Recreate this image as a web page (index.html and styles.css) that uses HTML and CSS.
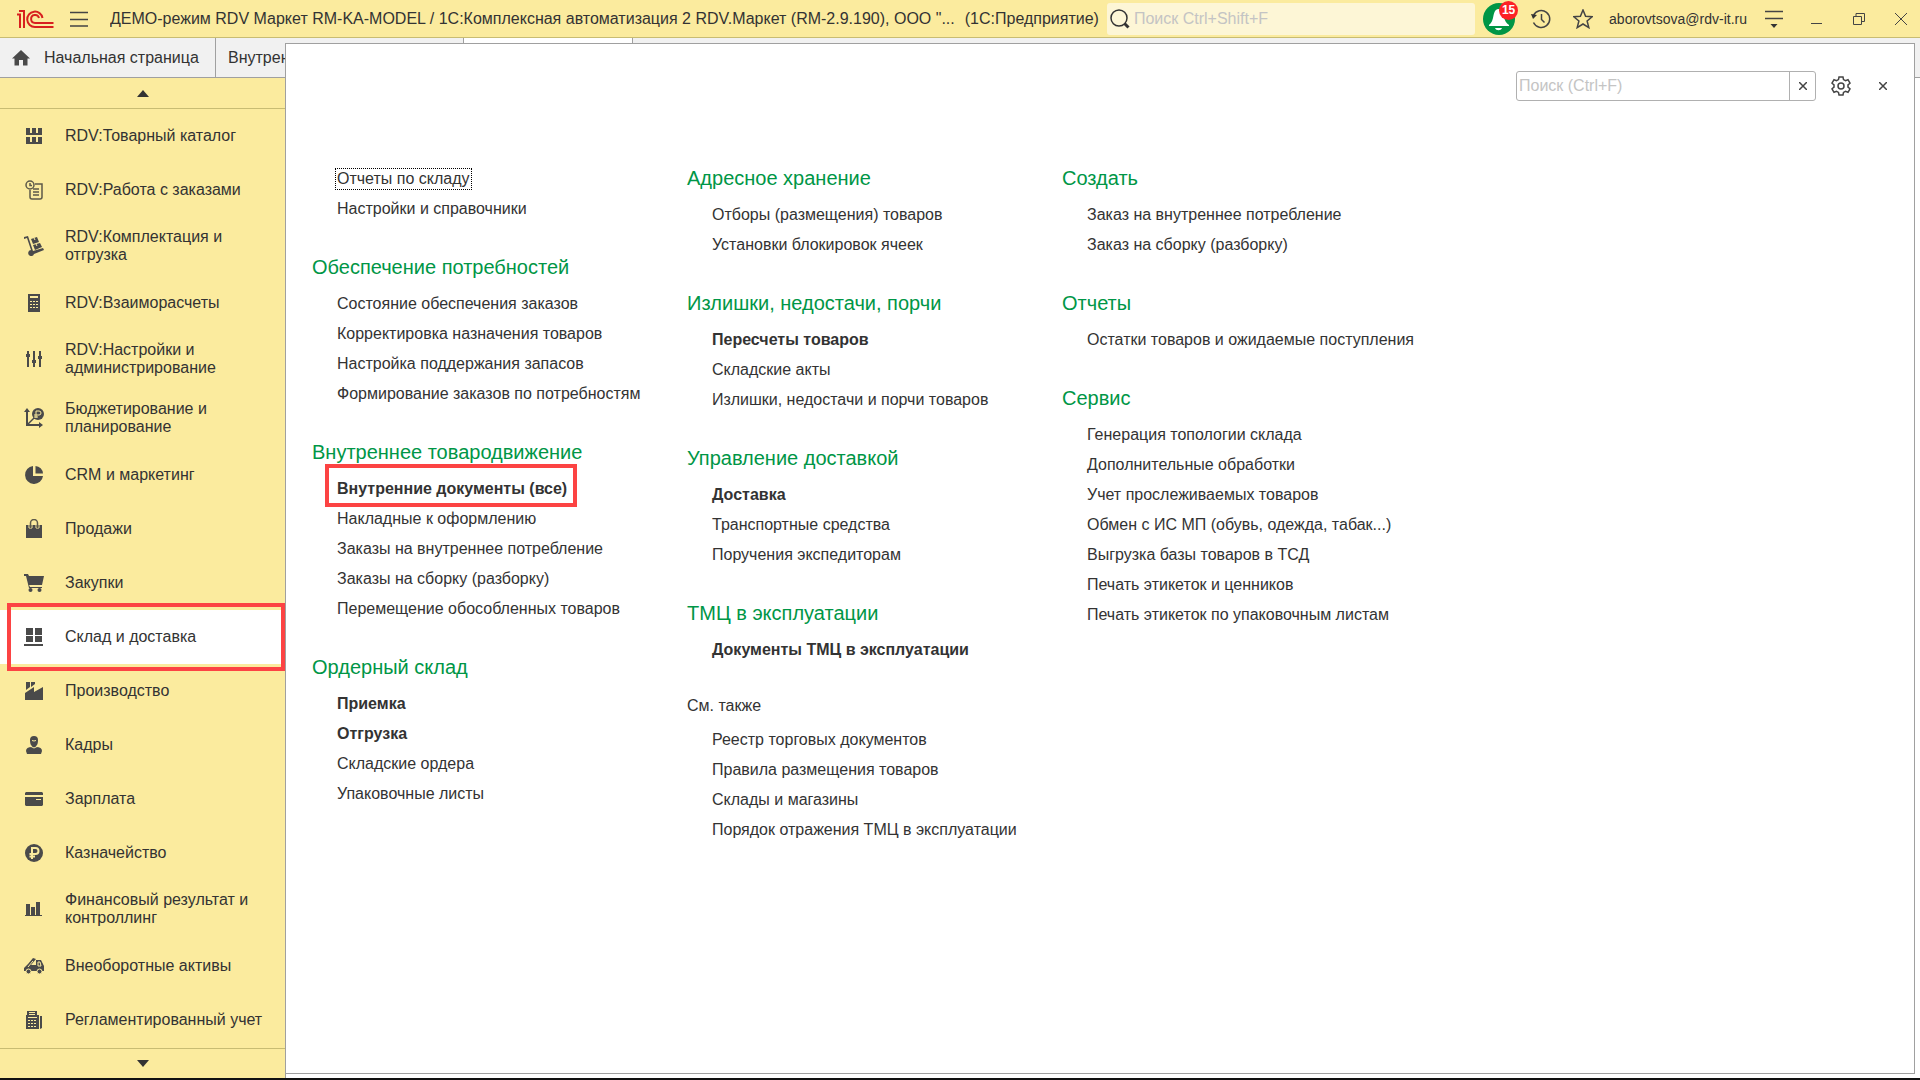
FILE: index.html
```html
<!DOCTYPE html>
<html lang="ru">
<head>
    <meta charset="UTF-8">
    <meta name="viewport" content="width=device-width, initial-scale=1.0">
    <title>1С:Предприятие</title>
    <link rel="stylesheet" href="styles.css">
</head>
<body>

    <!-- Top bar -->
    <header class="topbar">
        <svg class="logo" viewBox="0 0 38 20">
            <path d="M1 5.500H4V19M3 2H8V19M26.500 9A7.700 7.700 0 1 0 19 18H37.500M23 9A4 4 0 1 0 19 14H37.500"/>
        </svg>
        <button class="icon-btn menu-btn" aria-label="Меню">
            <svg viewBox="0 0 18 16"><path d="M0 1.500H18M0 8.500H18M0 15H18"/></svg>
        </button>
        <div class="app-title">ДЕМО-режим RDV Маркет RM-KA-MODEL / 1С:Комплексная автоматизация 2 RDV.Маркет (RM-2.9.190), ООО "...</div>
        <div class="app-name">(1С:Предприятие)</div>
        <div class="global-search">
            <svg viewBox="0 0 20 20"><circle cx="9" cy="9" r="8"/><path class="handle" d="M14.500 14.500L18.500 18.500"/></svg>
            <input type="text" placeholder="Поиск Ctrl+Shift+F" aria-label="Поиск по всей программе">
        </div>
        <button class="bell" aria-label="Уведомления">
            <svg viewBox="0 0 32 32">
                <circle cx="16" cy="16" r="16" fill="#009646"/>
                <path d="M15 6c-4 1-4 5-5 9-1 4-2 5-4 7v1h20v-1c-3-2-4-4-5-8-1-4-2-8-6-8zM12 25h7c-1 3-6 3-7 0z" fill="#fff"/>
            </svg>
            <span class="badge">15</span>
        </button>
        <button class="icon-btn history-btn" aria-label="История">
            <svg viewBox="0 0 20 20"><path d="M2.500 6.500A8.500 8.500 0 1 1 2.500 13.500M10.500 5V10.500L13.500 13.500"/><path class="solid" d="M0 5L6 6L2 10z"/></svg>
        </button>
        <button class="icon-btn star-btn" aria-label="Избранное">
            <svg viewBox="0 0 20 20"><path d="M10 1L12.600 7.300L19.200 7.700L14.100 12L15.800 18.600L10 15L4.200 18.600L5.900 12L0.800 7.700L7.400 7.300z"/></svg>
        </button>
        <a class="user" href="#">aborovtsova@rdv-it.ru</a>
        <button class="icon-btn settings-btn" aria-label="Настройки окна">
            <svg viewBox="0 0 18 18"><path d="M0 1.500H18M0 8.500H18"/><path class="solid" d="M5.500 14H12.500L9 18z"/></svg>
        </button>
        <div class="window-btns">
            <button class="icon-btn" aria-label="Свернуть"><svg viewBox="0 0 12 12"><path d="M0 10.500H11"/></svg></button>
            <button class="icon-btn" aria-label="Развернуть"><svg viewBox="0 0 12 12"><path d="M0.500 3.500H8.500V11.500H0.500zM3 3.500V0.500H11.500V8.500H8.500"/></svg></button>
            <button class="icon-btn" aria-label="Закрыть"><svg viewBox="0 0 12 12"><path d="M0 0L12 12M12 0L0 12"/></svg></button>
        </div>
    </header>

    <div class="workspace">

        <!-- Open windows -->
        <div class="tabs">
            <button class="tab tab-home">
                <svg viewBox="0 0 18 16"><path d="M9 0L0 8.500H2.500V15.500H7V10H11V15.500H15.500V8.500H18z"/></svg>
                Начальная страница
            </button>
            <button class="tab tab-doc">Внутренние документы</button>
            <button class="tab tab-active" aria-label="Текущее окно"></button>
        </div>

        <!-- Sections -->
        <nav class="sidebar">
            <button class="scroll-btn" aria-label="Вверх"><svg viewBox="0 0 12 7"><path d="M6 0L12 7H0z"/></svg></button>
            <ul class="sections">
                <li><a href="#">
                    <svg viewBox="0 0 20 20"><path d="M2 2h4v5H2zM8 2h4v5H8zM14 2h4v5h-4zM2 7h16v2H2zM2 11h4v5H2zM8 11h4v5H8zM14 11h4v5h-4zM2 16h16v2H2z"/></svg>
                    <span>RDV:Товарный каталог</span></a></li>
                <li><a href="#">
                    <svg viewBox="0 0 20 20" class="line"><circle cx="6" cy="5" r="4"/><path d="M6 3v2.500h2M11 4h7v13q0 2-2 2H8q-2 0-2-2v-7M9 9h6M9 12h6M9 15h6"/></svg>
                    <span>RDV:Работа с заказами</span></a></li>
                <li><a href="#">
                    <svg viewBox="0 0 20 20"><path d="M0 1l4-1 5 15 10-3 1 2-10 4a3 3 0 1 1-3-4L3 2 0 3zM7 3l6-2 2 5-6 2zM9 9l7-2 2 4-7 3z"/><path class="cut" d="M10 2l1 2M12 8l1 2"/></svg>
                    <span>RDV:Комплектация и отгрузка</span></a></li>
                <li><a href="#">
                    <svg viewBox="0 0 20 20"><path d="M4 1h12v18H4z"/><path class="cut" d="M6 3.500h8M6 4.500h8M6 8.500h2M9 8.500h2M12 8.500h2M6 11.500h2M9 11.500h2M12 11.500h2M6 14.500h2M9 14.500h2M12 14.500h2"/></svg>
                    <span>RDV:Взаиморасчеты</span></a></li>
                <li><a href="#">
                    <svg viewBox="0 0 20 20"><path d="M3 2h2v3h1v3H5v10H3V8H2V5h1zM9 2h2v9h1v3h-1v4H9v-4H8v-3h1zM15 2h2v5h1v3h-1v8h-2v-8h-1V7h1z"/></svg>
                    <span>RDV:Настройки и администрирование</span></a></li>
                <li><a href="#">
                    <svg viewBox="0 0 20 20"><path d="M3 0l3 4H4v11l6-6 1 1-6 6h10v-2l4 3-4 3v-2H2V4H0z"/><circle cx="14" cy="6" r="6"/><path class="cut" d="M12 10V3h3q2 0 2 2t-2 2h-5M10 9h4"/></svg>
                    <span>Бюджетирование и планирование</span></a></li>
                <li><a href="#">
                    <svg viewBox="0 0 20 20"><path d="M9 1a9 9 0 1 0 10 10H9zM11.500 1v7.500H19a8 8 0 0 0-7.500-7.500z"/></svg>
                    <span>CRM и маркетинг</span></a></li>
                <li><a href="#">
                    <svg viewBox="0 0 20 20"><path d="M2 6h16v13H2z"/><path class="cut" d="M5 6v3h3V6M12 6v3h3V6"/><path class="thin" d="M6.500 9V4a3.500 3.500 0 0 1 7 0v5"/></svg>
                    <span>Продажи</span></a></li>
                <li><a href="#">
                    <svg viewBox="0 0 20 20"><path d="M0 1h4l1 2h15l-2 9H5l1 2h12v1H5L2 3H0z"/><circle cx="6.500" cy="17" r="2"/><circle cx="15.500" cy="17" r="2"/></svg>
                    <span>Закупки</span></a></li>
                <li class="current"><a href="#">
                    <svg viewBox="0 0 20 20"><path d="M2 1h7v7H2zM11 1h7v7h-7zM2 9h7v6H2zM11 9h7v6h-7zM0 17h19v2H0z"/></svg>
                    <span>Склад и доставка</span></a></li>
                <li><a href="#">
                    <svg viewBox="0 0 20 20"><path d="M1 19v-7l9-6v5l9-5v13zM2 1h4v5L2 9zM7 1h4v2L7 6z"/></svg>
                    <span>Производство</span></a></li>
                <li><a href="#">
                    <svg viewBox="0 0 20 20"><path d="M6 5q0-4 4-4t4 4q0 5-2 6v1q6 0 6 4l-1 3H3l-1-3q0-4 6-4v-1Q6 10 6 5z"/><path class="cut" d="M8 5.500q2 1 4 0M7 11.500q3 3 6 0"/></svg>
                    <span>Кадры</span></a></li>
                <li><a href="#">
                    <svg viewBox="0 0 20 20"><path d="M2 3h16l1 1v2H1V4zM1 8h18v8l-1 1H2l-1-1z"/><path class="cut" d="M12 10.500h5"/></svg>
                    <span>Зарплата</span></a></li>
                <li><a href="#">
                    <svg viewBox="0 0 20 20"><circle cx="10" cy="10" r="9"/><path class="cut bold" d="M8 16V5h3.500q3 0 3 3t-3 3H5.500M5.500 13.500H11"/></svg>
                    <span>Казначейство</span></a></li>
                <li><a href="#">
                    <svg viewBox="0 0 20 20"><path d="M2 5h4v11h1V8h4v8h1V3h4v13h2v1H1v-1h1z"/></svg>
                    <span>Финансовый результат и контроллинг</span></a></li>
                <li><a href="#">
                    <svg viewBox="0 0 20 20"><path d="M0 12l4-4 5-6 3 1-5 6h5V4h5l3 6v5H0z"/><path class="cut" d="M2 8l6-6M4 11l5-6M14 6h2l1 4h-3z"/><circle cx="4.500" cy="15.500" r="2.500" class="wheel"/><circle cx="15.500" cy="15.500" r="2.500" class="wheel"/></svg>
                    <span>Внеоборотные активы</span></a></li>
                <li><a href="#">
                    <svg viewBox="0 0 20 20"><path d="M3 1h10v4h2v14H2V5h1zM16 6h2v12l-2 1z"/><path class="cut" d="M5 2.500h6M5 4.500h6M4 7.500h9M4 10.500h2M7 10.500h2M10 10.500h2M4 13.500h2M7 13.500h2M10 13.500h2M4 16.500h2M7 16.500h2M10 16.500h2"/></svg>
                    <span>Регламентированный учет</span></a></li>
            </ul>
            <button class="scroll-btn" aria-label="Вниз"><svg viewBox="0 0 12 7"><path d="M0 0H12L6 7z"/></svg></button>
        </nav>

        <!-- Functions menu, lies over the tabs and the work area -->
        <main class="panel">
            <div class="panel-tools">
                <div class="panel-search">
                    <input type="text" placeholder="Поиск (Ctrl+F)" aria-label="Поиск в меню">
                    <button aria-label="Очистить"><svg viewBox="0 0 8 8"><path d="M0 0L8 8M8 0L0 8"/></svg></button>
                </div>
                <button class="icon-btn gear-btn" aria-label="Настройка">
                    <svg viewBox="0 0 20 20"><path d="M8 1h4l.5 2.600 2 1.100 2.500-1 2 3.500-2 1.700v2.200l2 1.700-2 3.500-2.500-1-2 1.100L12 19H8l-.5-2.600-2-1.100-2.500 1-2-3.500 2-1.700V8.900L1 7.200l2-3.500 2.500 1 2-1.100z"/><circle cx="10" cy="10" r="3"/></svg>
                </button>
                <button class="icon-btn close-btn" aria-label="Закрыть"><svg viewBox="0 0 8 8"><path d="M0 0L8 8M8 0L0 8"/></svg></button>
            </div>

            <div class="columns">
                <div class="column">
                    <ul class="group no-title">
                        <li><a class="focused" href="#">Отчеты по складу</a></li>
                        <li><a href="#">Настройки и справочники</a></li>
                    </ul>
                    <h2>Обеспечение потребностей</h2>
                    <ul class="group">
                        <li><a href="#">Состояние обеспечения заказов</a></li>
                        <li><a href="#">Корректировка назначения товаров</a></li>
                        <li><a href="#">Настройка поддержания запасов</a></li>
                        <li><a href="#">Формирование заказов по потребностям</a></li>
                    </ul>
                    <h2>Внутреннее товародвижение</h2>
                    <ul class="group">
                        <li><a class="important marked" href="#">Внутренние документы (все)</a></li>
                        <li><a href="#">Накладные к оформлению</a></li>
                        <li><a href="#">Заказы на внутреннее потребление</a></li>
                        <li><a href="#">Заказы на сборку (разборку)</a></li>
                        <li><a href="#">Перемещение обособленных товаров</a></li>
                    </ul>
                    <h2>Ордерный склад</h2>
                    <ul class="group">
                        <li><a class="important" href="#">Приемка</a></li>
                        <li><a class="important" href="#">Отгрузка</a></li>
                        <li><a href="#">Складские ордера</a></li>
                        <li><a href="#">Упаковочные листы</a></li>
                    </ul>
                </div>

                <div class="column">
                    <h2>Адресное хранение</h2>
                    <ul class="group">
                        <li><a href="#">Отборы (размещения) товаров</a></li>
                        <li><a href="#">Установки блокировок ячеек</a></li>
                    </ul>
                    <h2>Излишки, недостачи, порчи</h2>
                    <ul class="group">
                        <li><a class="important" href="#">Пересчеты товаров</a></li>
                        <li><a href="#">Складские акты</a></li>
                        <li><a href="#">Излишки, недостачи и порчи товаров</a></li>
                    </ul>
                    <h2>Управление доставкой</h2>
                    <ul class="group">
                        <li><a class="important" href="#">Доставка</a></li>
                        <li><a href="#">Транспортные средства</a></li>
                        <li><a href="#">Поручения экспедиторам</a></li>
                    </ul>
                    <h2>ТМЦ в эксплуатации</h2>
                    <ul class="group">
                        <li><a class="important" href="#">Документы ТМЦ в эксплуатации</a></li>
                    </ul>
                    <h2 class="see-also">См. также</h2>
                    <ul class="group">
                        <li><a href="#">Реестр торговых документов</a></li>
                        <li><a href="#">Правила размещения товаров</a></li>
                        <li><a href="#">Склады и магазины</a></li>
                        <li><a href="#">Порядок отражения ТМЦ в эксплуатации</a></li>
                    </ul>
                </div>

                <div class="column">
                    <h2>Создать</h2>
                    <ul class="group">
                        <li><a href="#">Заказ на внутреннее потребление</a></li>
                        <li><a href="#">Заказ на сборку (разборку)</a></li>
                    </ul>
                    <h2>Отчеты</h2>
                    <ul class="group">
                        <li><a href="#">Остатки товаров и ожидаемые поступления</a></li>
                    </ul>
                    <h2>Сервис</h2>
                    <ul class="group">
                        <li><a href="#">Генерация топологии склада</a></li>
                        <li><a href="#">Дополнительные обработки</a></li>
                        <li><a href="#">Учет прослеживаемых товаров</a></li>
                        <li><a href="#">Обмен с ИС МП (обувь, одежда, табак...)</a></li>
                        <li><a href="#">Выгрузка базы товаров в ТСД</a></li>
                        <li><a href="#">Печать этикеток и ценников</a></li>
                        <li><a href="#">Печать этикеток по упаковочным листам</a></li>
                    </ul>
                </div>
            </div>
        </main>
    </div>

</body>
</html>
```

FILE: styles.css
```css
* {
    box-sizing: border-box;
}

body {
    margin: 0;
    min-height: 100vh;
    display: flex;
    flex-direction: column;
    border-bottom: 2px solid #111;
    font-family: "Liberation Sans", Arial, sans-serif;
    font-size: 16px;
    color: #333;
    background-color: #fff;
}

ul {
    list-style: none;
    margin: 0;
    padding: 0;
}

a {
    color: inherit;
    text-decoration: none;
}

button, input {
    font: inherit;
    color: inherit;
    border: none;
    padding: 0;
    background: none;
}

svg {
    display: block;
    flex-shrink: 0;
}

input::placeholder {
    color: #c4c4c4;
    opacity: 1;
}

/* Top bar */
.topbar {
    display: flex;
    align-items: center;
    height: 38px;
    padding: 0 13px 0 16px;
    background-color: #fbeb9e;
    border-bottom: 1px solid #c8bc73;
}

.logo {
    width: 38px;
    height: 20px;
    fill: none;
    stroke: #d8201f;
    stroke-width: 2;
}

.icon-btn {
    flex-shrink: 0;
}

.icon-btn svg {
    width: 20px;
    height: 20px;
    fill: none;
    stroke: #444;
    stroke-width: 1.5;
}

.icon-btn .solid {
    fill: #333;
    stroke: none;
}

.icon-btn.menu-btn {
    margin: 0 22px 0 16px;
}

.icon-btn.menu-btn svg {
    width: 18px;
    height: 16px;
}

.app-title {
    flex: 0 1 auto;
    min-width: 0;
    overflow: hidden;
    white-space: nowrap;
}

.app-name {
    margin: 0 8px 0 10px;
    white-space: nowrap;
}

.global-search {
    display: flex;
    align-items: center;
    flex: 1;
    gap: 4px;
    height: 32px;
    padding-left: 3px;
    border-radius: 3px;
    background-color: #fdf6d6;
}

.global-search svg {
    width: 20px;
    height: 20px;
    fill: none;
    stroke: #333;
    stroke-width: 1.5;
}

.global-search .handle {
    stroke-width: 3;
}

.global-search input {
    flex: 1;
    min-width: 0;
}

.bell {
    position: relative;
    flex-shrink: 0;
    margin: 0 16px 0 8px;
}

.bell svg {
    width: 32px;
    height: 32px;
}

.badge {
    position: absolute;
    top: -2px;
    right: -3px;
    width: 19px;
    height: 19px;
    border-radius: 50%;
    background-color: #fc2226;
    color: #fff;
    font-size: 12px;
    font-weight: bold;
    line-height: 19px;
    text-align: center;
}

.star-btn {
    margin: 0 16px 0 22px;
}

.user {
    font-size: 14px;
}

.settings-btn {
    margin: 0 28px 0 18px;
}

.icon-btn.settings-btn svg {
    width: 18px;
    height: 18px;
}

.window-btns {
    display: flex;
    gap: 30px;
}

.window-btns .icon-btn svg {
    width: 12px;
    height: 12px;
    stroke-width: 1;
}

/* Tabs */
.workspace {
    position: relative;
    flex: 1;
    display: flex;
    flex-direction: column;
}

.tabs {
    display: flex;
    height: 40px;
    background-color: #f1f1f1;
    border-bottom: 1px solid #a0a0a0;
}

.tab {
    display: flex;
    align-items: center;
    border-right: 1px solid #a0a0a0;
    white-space: nowrap;
}

.tab-home {
    gap: 14px;
    width: 216px;
    padding-left: 12px;
}

.tab-home svg {
    width: 18px;
    height: 16px;
    fill: #4a4a4a;
}

.tab-doc {
    width: 248px;
    padding-left: 12px;
}

.tab-active {
    width: 169px;
    background-color: #fff;
}

/* Sections */
.sidebar {
    display: flex;
    flex-direction: column;
    flex: 1;
    width: 286px;
    background-color: #fbeb9e;
    border-right: 1px solid #a0a0a0;
}

.scroll-btn {
    display: flex;
    align-items: center;
    justify-content: center;
    height: 31px;
    border-bottom: 1px solid #c8bc73;
}

.scroll-btn:last-child {
    height: 30px;
    margin-top: auto;
    border-top: 1px solid #c8bc73;
    border-bottom: none;
}

.scroll-btn svg {
    width: 12px;
    height: 7px;
    fill: #333;
}

.sections a {
    display: flex;
    align-items: center;
    gap: 21px;
    min-height: 54px;
    padding: 11px 8px 12px 24px;
    line-height: 18px;
}

.sections span {
    max-width: 204px;
}

.sections svg {
    width: 20px;
    height: 20px;
    fill: #4a4a4a;
}

.sections .line,
.sections .thin {
    fill: none;
    stroke: #5d5a4a;
    stroke-width: 1.5;
}

.sections .cut {
    fill: none;
    stroke: #fbeb9e;
    stroke-width: 1;
}

.sections .bold {
    stroke-width: 2;
}

.sections .wheel {
    stroke: #fbeb9e;
}

.sections .current {
    position: relative;
    background-color: #fff;
}

/* Red frames */
.current::after,
.marked::after {
    content: "";
    position: absolute;
    border: 4px solid #fc4343;
    pointer-events: none;
}

.current::after {
    inset: -7px 0 -7px 7px;
}

.marked::after {
    inset: -16px -10px -9px -12px;
}

/* Functions menu */
.panel {
    position: absolute;
    inset: 5px 5px 4px 285px;
    background-color: #fff;
    border: 1px solid #a0a0a0;
}

.panel-tools {
    display: flex;
    align-items: center;
    justify-content: flex-end;
    padding: 27px 27px 0 0;
}

.panel-search {
    display: flex;
    width: 300px;
    height: 30px;
    border: 1px solid #b0b0b0;
    border-radius: 3px;
}

.panel-search input {
    flex: 1;
    min-width: 0;
    padding-left: 2px;
}

.panel-search button {
    display: flex;
    align-items: center;
    justify-content: center;
    width: 26px;
    border-left: 1px solid #b0b0b0;
}

.panel-search svg,
.icon-btn.close-btn svg {
    width: 8px;
    height: 8px;
    stroke: #444;
    stroke-width: 1.5;
}

.gear-btn {
    margin: 0 28px 0 15px;
}

.columns {
    display: grid;
    grid-template-columns: 375px 375px 1fr;
    padding: 56px 26px 0;
}

.column {
    white-space: nowrap;
}

.column h2 {
    margin: 22px 0 0;
    padding-bottom: 1px;
    font-size: 20px;
    font-weight: normal;
    line-height: 42px;
    color: #009646;
}

.column h2:first-child {
    margin-top: 0;
}

.column .see-also {
    padding-bottom: 0;
    font-size: 16px;
    line-height: 38px;
    color: #333;
}

.group {
    padding-left: 25px;
}

.no-title {
    padding-top: 7px;
}

.group li {
    display: flex;
    align-items: center;
    height: 30px;
}

.group a {
    position: relative;
}

.focused {
    outline: 1px dotted #000;
    outline-offset: 1px;
}

.important {
    font-weight: bold;
}
```
